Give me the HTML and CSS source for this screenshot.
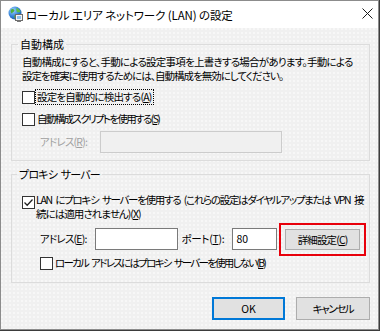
FILE: index.html
```html
<!DOCTYPE html>
<html lang="ja">
<head>
<meta charset="utf-8">
<title>ローカル エリア ネットワーク (LAN) の設定</title>
<link rel="stylesheet" href="styles.css">
</head>
<body>
<div class="window">
  <div class="titlebar">
    <svg class="app-icon" width="16" height="16" viewBox="0 0 16 16">
      <defs>
        <radialGradient id="gl" cx="0.35" cy="0.3" r="0.8">
          <stop offset="0" stop-color="#9fd3ff"/>
          <stop offset="0.6" stop-color="#2f7fd6"/>
          <stop offset="1" stop-color="#1a4f9c"/>
        </radialGradient>
      </defs>
      <circle cx="8" cy="7" r="6.5" fill="url(#gl)"/>
      <path d="M4 3.5 C5.5 2.5 7 3 7.5 4.5 C7 6 5.5 6 5 7.5 C4 7 3 5.5 4 3.5Z" fill="#4caf3c"/>
      <path d="M9.5 2 C11.5 2.5 13 4 13.5 6 C12.5 6.5 11.5 6 10.5 6.5 C9.5 5.5 9 4 9.5 2Z" fill="#5cbf45"/>
      <path d="M8 9 C9.5 8.5 11 9 11 10.5 C10 12 8.5 12.5 7.5 12 C7 11 7 10 8 9Z" fill="#4caf3c"/>
      <rect x="8.5" y="8.5" width="7" height="6" fill="#f4f4f4" stroke="#6c6c6c" stroke-width="1"/>
      <rect x="10" y="10" width="4" height="3" fill="#8fc3ee"/>
      <rect x="10" y="14.5" width="4" height="1.5" fill="#7a7a7a"/>
    </svg>
    <span class="title">ローカル エリア ネットワーク (LAN) の設定</span>
    <svg class="close" width="11" height="11" viewBox="0 0 11 11">
      <path d="M0.5 0.5 L10.5 10.5 M10.5 0.5 L0.5 10.5" stroke="#1a1a1a" stroke-width="1" fill="none"/>
    </svg>
  </div>
  <div class="content">
    <fieldset class="group group-auto">
      <legend>自動構成</legend>
      <div class="group-body auto-body">
        <p class="desc"><span class="line l1">自動構成にすると、手動による設定事項を上書きする場合があります。手動による</span><span class="line l2">設定を確実に使用するためには、自動構成を無効にしてください。</span></p>
        <div class="check row-detect">
          <span class="box"></span>
          <span class="label focus t-detect">設定を自動的に検出する(<u>A</u>)</span>
        </div>
        <div class="check row-script">
          <span class="box"></span>
          <span class="label t-script">自動構成スクリプトを使用する(<u>S</u>)</span>
        </div>
        <div class="field-row script-addr">
          <span class="field-label disabled addr-r">アドレス(<u>R</u>):</span>
          <span class="input disabled-input script-input"></span>
        </div>
      </div>
    </fieldset>
    <fieldset class="group group-proxy">
      <legend class="legend-proxy">プロキシ サーバー</legend>
      <div class="group-body proxy-body">
        <div class="check multi">
          <span class="box checked">
            <svg width="11" height="11" viewBox="0 0 11 11"><path d="M1.5 5.5 L4.2 8.2 L9.5 2.5" stroke="#222" stroke-width="1.3" fill="none"/></svg>
          </span>
          <span class="label t-use"><span class="line u1">LAN にプロキシ サーバーを使用する (これらの設定はダイヤルアップまたは VPN 接</span><span class="line u2">続には適用されません)(<u>X</u>)</span></span>
        </div>
        <div class="field-row proxy-addr">
          <span class="field-label addr-e">アドレス(<u>E</u>):</span>
          <span class="input addr-input"></span>
          <span class="field-label port-label">ポート(<u>T</u>):</span>
          <span class="input port-input">80</span>
          <span class="btn advanced">詳細設定(<u>C</u>)</span>
        </div>
        <div class="check row-bypass">
          <span class="box"></span>
          <span class="label t-bypass">ローカル アドレスにはプロキシ サーバーを使用しない(<u>B</u>)</span>
        </div>
      </div>
    </fieldset>
    <div class="buttons">
      <span class="btn ok">OK</span>
      <span class="btn cancel">キャンセル</span>
    </div>
  </div>
</div>
</body>
</html>
```
FILE: styles.css
```css
html, body {
  margin: 0;
  padding: 0;
}
body {
  width: 380px;
  height: 331px;
  overflow: hidden;
  background: #3b3b3b;
  font-family: "Noto Sans CJK JP", "Noto Sans", sans-serif;
  font-size: 10.5px;
  font-feature-settings: "palt" 1;
  color: #000;
}
.window {
  width: 377px;
  height: 328px;
  border: 1px solid #8c8c8c;
  background-color: #f0f0f0;
  display: flex;
  flex-direction: column;
}
.titlebar {
  height: 27px;
  background: #ffffff;
  display: flex;
  align-items: center;
  padding-left: 6px;
  flex: none;
}
.app-icon {
  flex: none;
  margin-right: 3px;
  margin-top: -1px;
}
.title {
  font-size: 11.5px;
  line-height: 14px;
  letter-spacing: -0.12px;
  white-space: nowrap;
}
.close {
  margin-left: auto;
  margin-right: 5px;
  margin-top: -2px;
}
.content {
  flex: 1;
  padding: 9px 8px 0 10px;
  display: flex;
  flex-direction: column;
  background-image: radial-gradient(circle at 1px 1px, #f8f8f8 0.7px, transparent 0.9px);
  background-size: 4px 4px;
}
.group {
  margin: 0;
  padding: 0;
  border: 1px solid #dcdcdc;
  min-width: 0;
}
.group legend {
  margin-left: 6px;
  padding: 0 2px;
  line-height: 14px;
  font-size: 11px;
}
.group legend.legend-proxy {
  margin-left: 5px;
  letter-spacing: -0.8px;
  word-spacing: 2px;
}
.group-body {
  padding: 4px 9px 7px 10px;
  display: flex;
  flex-direction: column;
}
.desc {
  margin: 0;
  line-height: 14px;
  white-space: nowrap;
}
.line {
  display: block;
}
.desc .l1 {
  letter-spacing: -0.75px;
}
.desc .l2 {
  letter-spacing: -1px;
}
.check {
  display: flex;
  align-items: center;
  height: 16px;
}
.box {
  flex: none;
  width: 13px;
  height: 13px;
  box-sizing: border-box;
  border: 1px solid #333333;
  background: #ffffff;
  display: flex;
  align-items: center;
  justify-content: center;
}
.label {
  box-sizing: border-box;
  border: 1px dotted transparent;
  padding: 0 1px;
  line-height: 14px;
  white-space: nowrap;
}
.label.focus {
  border-color: #000;
}
.t-detect {
  letter-spacing: -0.8px;
}
.t-script {
  letter-spacing: -1.65px;
}
.t-use .u1 {
  letter-spacing: -1.3px;
  word-spacing: 2.5px;
}
.t-use .u2 {
  letter-spacing: -0.95px;
}
.t-bypass {
  letter-spacing: -1.75px;
  word-spacing: 2.5px;
}
.row-detect {
  margin-top: 6px;
}
.row-script {
  margin-top: 6px;
}
.field-row {
  display: flex;
  align-items: center;
  height: 22px;
  white-space: nowrap;
}
.script-addr {
  margin-top: 4px;
  padding-left: 18px;
}
.field-label {
  line-height: 14px;
}
.disabled {
  color: #a0a0a0;
}
.addr-r {
  width: 60px;
  letter-spacing: -0.8px;
}
.input {
  box-sizing: border-box;
  height: 22px;
  border: 1px solid #7a7a7a;
  background: #ffffff;
  line-height: 20px;
  padding-left: 3px;
}
.disabled-input {
  border-color: #cccccc;
  background: #f0f0f0;
}
.script-input {
  width: 182px;
}
.proxy-body {
  padding-top: 11px;
  padding-bottom: 11px;
}
.check.multi {
  align-items: flex-start;
  height: auto;
}
.check.multi .box {
  margin-top: 4px;
}
.check.multi .label {
  padding-left: 0;
}
.proxy-addr {
  margin-top: 6px;
  padding-left: 18px;
  align-items: flex-start;
}
.proxy-addr .field-label {
  margin-top: 4px;
}
.addr-e {
  width: 55px;
  letter-spacing: -0.8px;
}
.addr-input {
  width: 83px;
}
.port-label {
  margin-left: 4px;
  width: 51px;
  letter-spacing: -0.3px;
}
.port-input {
  width: 45px;
}
.btn {
  box-sizing: border-box;
  display: flex;
  align-items: center;
  justify-content: center;
  background: #e1e1e1;
  border: 1px solid #adadad;
  white-space: nowrap;
}
.advanced {
  margin-left: 8px;
  margin-top: 1px;
  width: 75px;
  height: 21px;
  letter-spacing: -0.85px;
  outline: 2px solid #e8000b;
  outline-offset: 4px;
}
.row-bypass {
  margin-top: 5px;
  padding-left: 18px;
}
.group-proxy {
  margin-top: 6px;
}
.buttons {
  display: flex;
  justify-content: flex-end;
  gap: 11px;
  margin-top: 14px;
}
.ok {
  width: 73px;
  height: 23px;
  border: 2px solid #0078d7;
}
.cancel {
  width: 74px;
  height: 23px;
  letter-spacing: -1.4px;
}
```
